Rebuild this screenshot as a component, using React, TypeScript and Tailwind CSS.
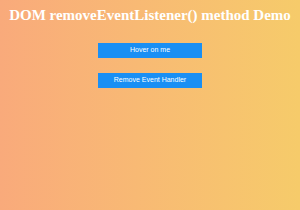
export default function App() {
  return (
    <div className="flex h-[210px] w-[300px] flex-col items-center bg-gradient-to-r from-[#f9aa7b] to-[#f6cb6a] font-['Liberation_Serif',serif]">
      <h1 className="mt-[6px] whitespace-nowrap text-center text-[15px] font-bold leading-[18px] text-white">DOM removeEventListener() method Demo</h1>
      <button type="button" className="mt-[19px] h-[15px] w-[104px] bg-[#1a8ff4] font-['Liberation_Sans',sans-serif] text-[7px] text-white">Hover on me</button>
      <button type="button" className="mt-[15px] h-[15px] w-[104px] bg-[#1a8ff4] font-['Liberation_Sans',sans-serif] text-[7px] text-white">Remove Event Handler</button>
    </div>
  );
}
